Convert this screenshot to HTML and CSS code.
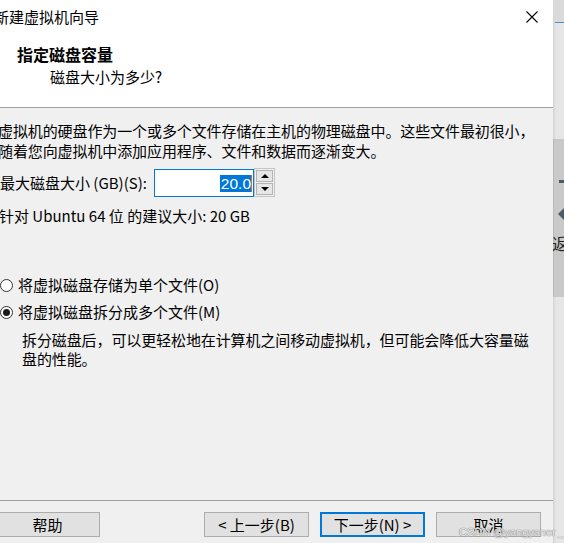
FILE: index.html
```html
<!DOCTYPE html>
<html lang="zh-CN">
<head>
    <meta charset="utf-8">
    <title>新建虚拟机向导</title>
    <link rel="stylesheet" href="styles.css">
</head>
<body>
<div class="screen">
    <div class="wizard">
        <div class="titleBar">
            <span class="titleText">新建虚拟机向导</span>
            <svg class="closeIcon" width="12" height="12" viewBox="0 0 12 12">
                <path d="M0.5 0.5L11.5 11.5M11.5 0.5L0.5 11.5" stroke="#000" stroke-width="1.1" fill="none"/>
            </svg>
        </div>
        <div class="header">
            <div class="headTitle">指定磁盘容量</div>
            <div class="headSub">磁盘大小为多少?</div>
        </div>
        <div class="content">
            <p class="intro">虚拟机的硬盘作为一个或多个文件存储在主机的物理磁盘中。这些文件最初很小，<br>随着您向虚拟机中添加应用程序、文件和数据而逐渐变大。</p>
            <div class="sizeRow">
                <span class="sizeLabel">最大磁盘大小 (GB)(S):</span>
                <div class="spinBox">
                    <div class="spinInput"><span class="selected">20.0</span><span class="caret"></span></div>
                    <div class="spinButtons">
                        <div class="spinBtn"><span class="arrowUp"></span></div>
                        <div class="spinBtn"><span class="arrowDown"></span></div>
                    </div>
                </div>
            </div>
            <p class="hint">针对 Ubuntu 64 位 的建议大小: 20 GB</p>
            <div class="radioRow first"><span class="radio"></span>将虚拟磁盘存储为单个文件(O)</div>
            <div class="radioRow"><span class="radio checked"></span>将虚拟磁盘拆分成多个文件(M)</div>
            <p class="optionNote">拆分磁盘后，可以更轻松地在计算机之间移动虚拟机，但可能会降低大容量磁<br>盘的性能。</p>
        </div>
        <div class="footer">
            <div class="btn">帮助</div>
            <div class="navBtns">
                <div class="btn">&lt; 上一步(B)</div>
                <div class="btn default">下一步(N) &gt;</div>
                <div class="btn">取消</div>
            </div>
        </div>
    </div>
    <div class="desk">
        <div class="deskTop"></div>
        <div class="deskPanel">
            <span class="panelDash"></span>
            <span class="panelArrow"></span>
            <span class="panelText">返</span>
        </div>
    </div>
</div>
<div class="watermark">CSDN @yangyaner<span class="wmLine">__</span></div>
</body>
</html>
```

FILE: styles.css
```css
html, body{
    margin: 0;
    padding: 0;
    width: 564px;
    height: 543px;
    overflow: hidden;
    background: #e8e8e8;
    font-family: "Noto Sans CJK SC", "Noto Sans", sans-serif;
    color: #000;
}
p{
    margin: 0;
}
.screen{
    display: flex;
    width: 564px;
    height: 543px;
}
.wizard{
    width: 563px;
    margin-left: -10px;
    flex: none;
    display: flex;
    flex-direction: column;
    background: #f0f0f0;
}
.titleBar{
    height: 34px;
    display: flex;
    align-items: center;
    justify-content: space-between;
    background: #fff;
    padding: 0 15px 0 4px;
    font-size: 15px;
}
.titleText{
    line-height: 20px;
}
.closeIcon{
    display: block;
}
.header{
    background: #fff;
    border-bottom: 1px solid #a0a0a0;
    box-sizing: border-box;
    height: 74px;
}
.headTitle{
    font-size: 16px;
    font-weight: bold;
    line-height: 20px;
    padding: 10px 0 0 27px;
}
.headSub{
    font-size: 15px;
    line-height: 20px;
    padding: 3px 0 0 60px;
}
.content{
    height: 392px;
    font-size: 15px;
    line-height: 20px;
}
.intro{
    padding: 13px 0 0 8px;
    letter-spacing: -0.1px;
    white-space: nowrap;
}
.sizeRow{
    display: flex;
    align-items: center;
    margin-top: 8px;
    padding-left: 10px;
    height: 28px;
}
.sizeLabel{
    width: 154px;
    flex: none;
}
.spinBox{
    display: flex;
}
.spinInput{
    width: 100px;
    height: 28px;
    box-sizing: border-box;
    border: 1px solid #0078d7;
    background: #fff;
    display: flex;
    align-items: center;
    justify-content: flex-end;
    padding-right: 1px;
}
.selected{
    font-family: "Liberation Sans", Arial, sans-serif;
    font-size: 15.5px;
    line-height: 17px;
    background: #0078d7;
    color: #fff;
    padding-left: 1px;
}
.caret{
    width: 1px;
    height: 17px;
    background: #d0702a;
}
.spinButtons{
    width: 21px;
    height: 29px;
    margin-top: -1px;
    box-sizing: border-box;
    border: 1px solid #c4c4c4;
    display: flex;
    flex-direction: column;
    gap: 1px;
    padding: 1px;
    background: #f0f0f0;
}
.spinBtn{
    flex: 1;
    border: 1px solid #b4b4b4;
    background: #e6e6e6;
    display: flex;
    align-items: center;
    justify-content: center;
}
.arrowUp{
    width: 0;
    height: 0;
    border-left: 4px solid transparent;
    border-right: 4px solid transparent;
    border-bottom: 4px solid #000;
}
.arrowDown{
    width: 0;
    height: 0;
    border-left: 4px solid transparent;
    border-right: 4px solid transparent;
    border-top: 4px solid #000;
}
.hint{
    margin-top: 9px;
    padding-left: 9px;
}
.radioRow{
    display: flex;
    align-items: center;
    height: 20px;
    font-size: 15px;
    margin-top: 7px;
    padding-left: 10px;
}
.radioRow.first{
    margin-top: 49px;
}
.radio{
    width: 13px;
    height: 13px;
    box-sizing: border-box;
    border: 1px solid #333;
    border-radius: 50%;
    background: #fff;
    margin-right: 5px;
    display: flex;
    align-items: center;
    justify-content: center;
}
.radio.checked::after{
    content: "";
    width: 7px;
    height: 7px;
    border-radius: 50%;
    background: #1a1a1a;
}
.optionNote{
    font-size: 15px;
    line-height: 19px;
    margin-top: 8px;
    padding-left: 32px;
    white-space: nowrap;
    letter-spacing: -0.1px;
}
.footer{
    border-top: 1px solid #a0a0a0;
    padding: 11px 12px 0 5px;
    display: flex;
    justify-content: space-between;
    flex: 1;
}
.navBtns{
    display: flex;
    gap: 11px;
}
.btn{
    width: 105px;
    height: 25px;
    box-sizing: border-box;
    border: 1px solid #adadad;
    background: #e1e1e1;
    font-size: 15px;
    display: flex;
    align-items: center;
    justify-content: center;
}
.btn.default{
    border: 2px solid #0078d7;
}
.desk{
    width: 11px;
    flex: none;
    background: linear-gradient(to right, #d2d2d2, #e6e6e6 3px);
    display: flex;
    flex-direction: column;
    overflow: hidden;
}
.deskTop{
    height: 22px;
    background: #dadada;
    border-bottom: 1px solid #4a8fcc;
    margin-left: 2px;
}
.deskPanel{
    margin-top: 116px;
    height: 158px;
    background: #c9c9c9;
    border-left: 1px solid #b8b8b8;
}
.panelDash{
    display: block;
    width: 6px;
    height: 3px;
    background: #4b5b67;
    margin: 41px 0 0 5px;
}
.panelArrow{
    display: block;
    width: 0;
    height: 0;
    border-top: 7px solid transparent;
    border-bottom: 7px solid transparent;
    border-right: 7px solid #4b5b67;
    margin: 24px 0 0 4px;
}
.panelText{
    display: block;
    font-size: 16px;
    line-height: 20px;
    margin: 12px 0 0 -2px;
    white-space: nowrap;
    color: #222;
}
.watermark{
    position: absolute;
    left: 459px;
    top: 524px;
    font-family: "Liberation Sans", Arial, sans-serif;
    font-size: 11px;
    line-height: 16px;
    color: rgba(255,255,255,0.85);
    text-shadow: 0 0 1px #7a7a7a, 0 0 1px #7a7a7a;
    white-space: nowrap;
}
.wmLine{
    margin-left: 2px;
}
```
